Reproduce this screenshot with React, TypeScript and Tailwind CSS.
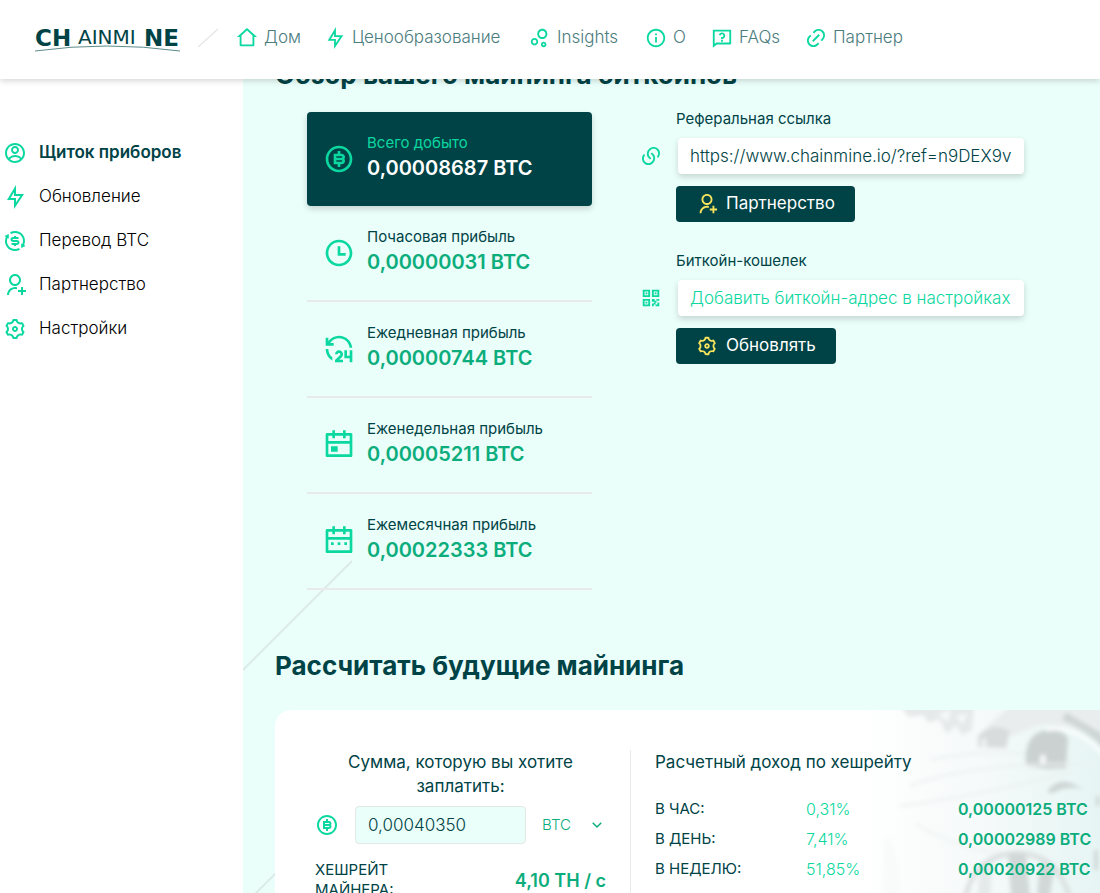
import { useState } from "react";
import { IconType } from "react-icons";
import {
  Ri24HoursLine,
  RiAccountCircleLine,
  RiArrowDownSLine,
  RiBitCoinLine,
  RiBubbleChartLine,
  RiCalendar2Line,
  RiCalendarEventLine,
  RiExchangeDollarLine,
  RiFlashlightLine,
  RiHome2Line,
  RiInformationLine,
  RiLink,
  RiLinksLine,
  RiQrCodeLine,
  RiQuestionnaireLine,
  RiSettings3Line,
  RiTimeLine,
  RiUserAddLine,
} from "react-icons/ri";

type Item = {
  label: string;
  icon: IconType;
  width?: string;
};

type Stat = {
  label: string;
  value: string;
  icon: IconType;
};

const navItems: Item[] = [
  { label: "Дом", icon: RiHome2Line, width: "w-[88px]" },
  { label: "Ценообразование", icon: RiFlashlightLine, width: "w-[205px]" },
  { label: "Insights", icon: RiBubbleChartLine, width: "w-[116px]" },
  { label: "О", icon: RiInformationLine, width: "w-[66px]" },
  { label: "FAQs", icon: RiQuestionnaireLine, width: "w-[94px]" },
  { label: "Партнер", icon: RiLink, width: "w-[110px]" },
];

const sideItems: Item[] = [
  { label: "Щиток приборов", icon: RiAccountCircleLine },
  { label: "Обновление", icon: RiFlashlightLine },
  { label: "Перевод BTC", icon: RiExchangeDollarLine },
  { label: "Партнерство", icon: RiUserAddLine },
  { label: "Настройки", icon: RiSettings3Line },
];

const stats: Stat[] = [
  { label: "Почасовая прибыль", value: "0,00000031 BTC", icon: RiTimeLine },
  { label: "Ежедневная прибыль", value: "0,00000744 BTC", icon: Ri24HoursLine },
  { label: "Еженедельная прибыль", value: "0,00005211 BTC", icon: RiCalendarEventLine },
  { label: "Ежемесячная прибыль", value: "0,00022333 BTC", icon: RiCalendar2Line },
];

const income = [
  { period: "В ЧАС:", percent: "0,31%", value: "0,00000125 BTC" },
  { period: "В ДЕНЬ:", percent: "7,41%", value: "0,00002989 BTC" },
  { period: "В НЕДЕЛЮ:", percent: "51,85%", value: "0,00020922 BTC" },
];

function Logo() {
  return (
    <svg width="146" height="36" viewBox="0 -6 146 36" role="img" aria-label="Chainmine" className="shrink-0">
      <g fill="#004346" fontFamily="'DejaVu Sans', sans-serif">
        <text x="0" y="20" fontSize="23" fontWeight="700">CH</text>
        <text x="43" y="18" fontSize="20" fontWeight="400">AINMI</text>
        <text x="109" y="20" fontSize="23" fontWeight="700">NE</text>
      </g>
      <path d="M0 25 Q72 15 145 25" fill="none" stroke="#5d8b8c" strokeWidth="1" />
    </svg>
  );
}

function Header() {
  return (
    <header className="relative z-10 flex h-[79px] shrink-0 items-center bg-white pl-[35px] pb-1 shadow-[0_2px_6px_rgba(0,0,0,0.16)]">
      <a href="#home">
        <Logo />
      </a>
      <svg width="22" height="20" viewBox="0 0 22 20" className="mx-4 shrink-0" aria-hidden="true">
        <path d="M1 19 21 1" stroke="#e6e8e8" strokeWidth="1.5" />
      </svg>
      <nav className="flex items-center pl-px">
        {navItems.map(({ label, icon: Icon, width }) => (
          <a
            key={label}
            href="#nav"
            className={`flex shrink-0 items-center gap-1.5 text-[17px] font-light text-[#4b7c7e] ${width}`}
          >
            <Icon size={22} className="shrink-0 text-[#0bd8a0]" />
            {label}
          </a>
        ))}
      </nav>
    </header>
  );
}

function Sidebar() {
  return (
    <aside className="w-[243px] shrink-0 bg-white pt-[52px]">
      <ul>
        {sideItems.map(({ label, icon: Icon }, i) => (
          <li key={label}>
            <a
              href="#side"
              className={`flex h-11 items-center gap-3 pl-[3px] text-[17px] ${
                i === 0 ? "font-semibold text-[#004346]" : "font-light text-black"
              }`}
            >
              <Icon size={24} className="shrink-0 text-[#0bd8a0]" />
              {label}
            </a>
          </li>
        ))}
      </ul>
    </aside>
  );
}

function StatRow({ stat, active = false }: { stat: Stat; active?: boolean }) {
  const Icon = stat.icon;
  return (
    <div
      className={
        active
          ? "rounded bg-[#004346] shadow-[0_3px_6px_rgba(0,0,0,0.16)]"
          : "border-b-2 border-[#e8ebea]"
      }
    >
      <div className="flex h-[94px] items-center gap-3 pl-4">
        <Icon size={32} className="shrink-0 text-[#0bd8a0]" />
        <div>
          <p className={`text-[15px] leading-[18px] ${active ? "text-[#0bd8a0]" : "text-[#004346]"}`}>
            {stat.label}
          </p>
          <p className={`text-[20px] font-semibold leading-8 ${active ? "text-white" : "text-[#0cad7c]"}`}>
            {stat.value}
          </p>
        </div>
      </div>
    </div>
  );
}

type FieldProps = {
  id: string;
  label: string;
  value?: string;
  placeholder?: string;
  icon: IconType;
  button: string;
  buttonIcon: IconType;
};

function Field({ id, label, value, placeholder, icon: Icon, button, buttonIcon: ButtonIcon }: FieldProps) {
  return (
    <div className="mb-[29px]">
      <label htmlFor={id} className="ml-9 block text-[15px] leading-5 text-[#004346]">
        {label}
      </label>
      <div className="mt-[9px] flex items-center gap-4">
        <Icon size={22} className="shrink-0 text-[#0bd8a0]" />
        <input
          id={id}
          type="text"
          readOnly
          value={value ?? ""}
          placeholder={placeholder}
          className="h-9 min-w-0 flex-1 rounded bg-white px-3 text-[17px] font-light text-[#004346] shadow-[0_3px_6px_rgba(0,0,0,0.16)] outline-none placeholder:text-[#0bd8a0]"
        />
      </div>
      <button
        type="button"
        className="mt-3 ml-9 flex h-9 items-center gap-2 rounded bg-[#004346] px-5 text-[17px] text-white"
      >
        <ButtonIcon size={22} className="text-[#f8e45c]" />
        {button}
      </button>
    </div>
  );
}

// faded picture of coins in the corner of the calculator
function CoinsBackdrop() {
  return (
    <svg
      className="pointer-events-none absolute top-0 right-0 h-[193px] w-60"
      viewBox="0 0 240 193"
      aria-hidden="true"
    >
      <defs>
        <linearGradient id="tint" x1="0" x2="1" y1="0" y2="0">
          <stop offset="0" stopColor="#ffffff" />
          <stop offset="0.45" stopColor="#f7fafa" />
          <stop offset="1" stopColor="#e6f5f4" />
        </linearGradient>
        <filter id="soft" x="-10%" y="-10%" width="120%" height="120%">
          <feGaussianBlur stdDeviation="2" />
        </filter>
      </defs>
      <rect width="240" height="193" fill="url(#tint)" />
      <g filter="url(#soft)">
        <path d="M40 -4h74l-2 24-10 5-6-10-9 9-8-15-10 4-6-8-14 2z" fill="#e6e9e9" />
        <path d="M78 4l10 8 3-12zM96 6l6 8 6-10z" fill="#f7f9f9" />
        <path d="M150 -4h100v38L212 18q-30-10-58 8-16-4-28-8z" fill="#e9eded" />
        <path d="M118 26q8-10 22-9l10 4-4 17-28-1z" fill="#d8dcdc" />
        <ellipse cx="124" cy="33" rx="3" ry="5" fill="#eef1f1" />
        <path d="M206 2l40 24v14q-20-20-44-30z" fill="#cfd6d6" />
        <path d="M166 56q-3-32 20-36 16-2 22 8l-2 30-18 1z" fill="#cbd1d1" />
        <ellipse cx="183" cy="50" rx="3" ry="6" fill="#f6f9f9" />
        <path d="M186 20q30-6 56 24" fill="none" stroke="#fff" strokeWidth="3" />
        <path d="M187 82q10-15 26-8l10 5q-18-4-30 4z" fill="#ced4d4" />
        <path
          d="M50 76q60-24 186-22M40 96q80-10 170-34M56 114q60 34 100 28M70 50q50-10 96-6"
          fill="none"
          stroke="#ebefef"
          strokeWidth="2"
        />
        <path d="M104 200q4-55 54-57 46 2 54 57" fill="none" stroke="#dbe0e0" strokeWidth="5" />
        <path d="M148 144h18l5 54h-19zM180 152l14 8-6 38h-12z" fill="#d2d8d8" />
        <path d="M120 160l12-8-2 46h-14z" fill="#e4e9e9" />
        <path d="M24 130q14-12 18 68H22z" fill="#f9fafa" />
        <path d="M238 86v10M236 140v20" stroke="#cfd6d6" strokeWidth="4" />
      </g>
    </svg>
  );
}

function Calculator() {
  const [amount, setAmount] = useState("0,00040350");

  return (
    <section className="relative mt-[26px] flex flex-1 overflow-hidden rounded-tl-2xl bg-white pt-10 pl-10">
      <CoinsBackdrop />
      <div className="w-[316px] shrink-0 border-r border-[#e8ebea] pr-6 text-[#004346]">
        <label htmlFor="amount" className="block text-center text-[17px] leading-6">
          Сумма, которую вы хотите заплатить:
        </label>
        <div className="mt-2 flex items-center gap-4">
          <RiBitCoinLine size={24} className="shrink-0 text-[#0bd8a0]" />
          <input
            id="amount"
            type="text"
            value={amount}
            onChange={(e) => setAmount(e.target.value)}
            className="h-[38px] w-[171px] rounded border border-[#e2e8e6] bg-[#eafefa] px-3 text-[17px] font-light outline-none"
          />
          <div className="relative flex flex-1 items-center">
            <select
              aria-label="Валюта"
              className="w-full appearance-none bg-transparent text-[15px] font-light text-[#0cad7c] outline-none"
            >
              <option>BTC</option>
              <option>USD</option>
            </select>
            <RiArrowDownSLine size={18} className="pointer-events-none absolute right-0 text-[#0cad7c]" />
          </div>
        </div>
        <div className="mt-4 flex items-center justify-between">
          <p className="w-[110px] text-[15px] leading-5">ХЕШРЕЙТ МАЙНЕРА:</p>
          <p className="text-[18px] font-semibold text-[#0cad7c]">4,10 TH / с</p>
        </div>
      </div>
      <div className="relative pl-6 text-[#004346]">
        <h3 className="text-[17px] leading-6">Расчетный доход по хешрейту</h3>
        <table className="mt-5 table-fixed">
          <tbody>
            {income.map((row) => (
              <tr key={row.period} className="h-[30px]">
                <th scope="row" className="w-[151px] text-left text-[15px] font-normal">
                  {row.period}
                </th>
                <td className="w-[152px] text-base font-light text-[#0bd8a0]">{row.percent}</td>
                <td className="text-base font-semibold whitespace-nowrap text-[#0cad7c]">{row.value}</td>
              </tr>
            ))}
          </tbody>
        </table>
      </div>
    </section>
  );
}

export default function App() {
  return (
    <div className="flex h-screen flex-col overflow-hidden bg-white font-['Inter','Noto_Sans',sans-serif]">
      <Header />
      <div className="flex min-h-0 flex-1">
        <Sidebar />
        <main className="relative flex min-w-0 flex-1 flex-col bg-[#eafefa] pl-8">
          <svg className="pointer-events-none absolute top-0 left-0 h-full w-32" aria-hidden="true">
            <path d="M0 591 109 482M0 827 109 718" stroke="#dcebe8" strokeWidth="2" />
          </svg>
          <h2 className="-mt-[22px] text-[26px] leading-9 font-bold text-[#004346]">
            Обзор вашего майнинга биткойнов
          </h2>
          <div className="relative mt-[19px] flex gap-12 pl-8">
            <div className="w-[285px] shrink-0">
              <StatRow active stat={{ label: "Всего добыто", value: "0,00008687 BTC", icon: RiBitCoinLine }} />
              {stats.map((stat) => (
                <StatRow key={stat.label} stat={stat} />
              ))}
            </div>
            <div className="-mt-[3px] max-w-[384px] flex-1">
              <Field
                id="referral"
                label="Реферальная ссылка"
                value="https://www.chainmine.io/?ref=n9DEX9v"
                icon={RiLinksLine}
                button="Партнерство"
                buttonIcon={RiUserAddLine}
              />
              <Field
                id="wallet"
                label="Биткойн-кошелек"
                placeholder="Добавить биткойн-адрес в настройках"
                icon={RiQrCodeLine}
                button="Обновлять"
                buttonIcon={RiSettings3Line}
              />
            </div>
          </div>
          <h2 className="mt-[58px] text-[26px] leading-9 font-bold text-[#004346]">
            Рассчитать будущие майнинга
          </h2>
          <Calculator />
        </main>
      </div>
    </div>
  );
}
